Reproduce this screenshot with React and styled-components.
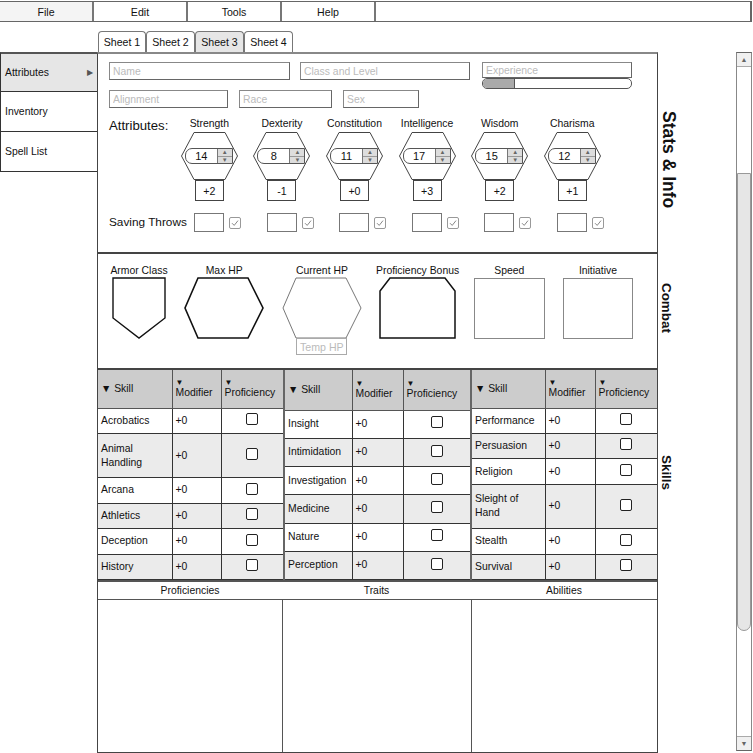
import React from 'react'
import styled, { createGlobalStyle } from 'styled-components'

const GlobalStyle = createGlobalStyle`
  html, body { margin: 0; padding: 0; background: #fff; }
  body { font-family: "Liberation Sans", Arial, sans-serif; color: #111; }
  * { box-sizing: border-box; }
`

const menus = [`File`, `Edit`, `Tools`, `Help`]
const sheets = [`Sheet 1`, `Sheet 2`, `Sheet 3`, `Sheet 4`]
const navItems = [`Attributes`, `Inventory`, `Spell List`]
const attributes = [
  { name: `Strength`, score: 14, mod: `+2` },
  { name: `Dexterity`, score: 8, mod: `-1` },
  { name: `Constitution`, score: 11, mod: `+0` },
  { name: `Intelligence`, score: 17, mod: `+3` },
  { name: `Wisdom`, score: 15, mod: `+2` },
  { name: `Charisma`, score: 12, mod: `+1` },
]
const skillTables = [
  { width: 185, cols: [74, 49, 62], head: 38, skills: [`Acrobatics`, `Animal Handling`, `Arcana`, `Athletics`, `Deception`, `History`] },
  { width: 187, cols: [67, 51, 67], head: 40, skills: [`Insight`, `Intimidation`, `Investigation`, `Medicine`, `Nature`, `Perception`] },
  { width: 187, cols: [73, 50, 62], head: 38, skills: [`Performance`, `Persuasion`, `Religion`, `Sleight of Hand`, `Stealth`, `Survival`] },
]
const notes = [
  { title: `Proficiencies`, width: 184 },
  { title: `Traits`, width: 189 },
  { title: `Abilities`, width: 186 },
]

const App = () => {
  return (
    <Page>
      <GlobalStyle />
      <MenuBar>
        {menus.map((m, i) => <MenuItem key={m} active={i === 0}>{m}</MenuItem>)}
        <MenuFill />
      </MenuBar>
      <TabRow>
        {sheets.map((s, i) => <Tab key={s} active={i === 2}>{s}</Tab>)}
      </TabRow>
      <Body>
        <Sidebar>
          {navItems.map((n, i) => (
            <NavItem key={n} active={i === 0}>
              {n}
              {i === 0 && <NavArrow>▶</NavArrow>}
            </NavItem>
          ))}
        </Sidebar>

        <Main>
          <StatsSection>
            <FieldRow>
              <Field width={181} placeholder="Name" />
              <Field width={170} placeholder="Class and Level" style={{ marginLeft: 10 }} />
              <ExpBlock>
                <Field width={150} height={16} placeholder="Experience" />
                <Progress><ProgressFill /></Progress>
              </ExpBlock>
            </FieldRow>
            <FieldRow gap={11} top={1}>
              <Field width={119} placeholder="Alignment" />
              <Field width={93} placeholder="Race" />
              <Field width={76} placeholder="Sex" />
            </FieldRow>

            <AttrRow>
              <AttrTitle>Attributes:</AttrTitle>
              <AttrGrid>
                {attributes.map(a => (
                  <AttrCol key={a.name}>
                    <AttrLabel>{a.name}</AttrLabel>
                    <HexBox>
                      <svg width="57" height="48" viewBox="0 0 57 48">
                        <polygon points="13,0.5 44,0.5 56.5,24 44,47.5 13,47.5 0.5,24" fill="#fff" stroke="#444" strokeWidth="1" />
                      </svg>
                      <Stepper>
                        <StepValue>{a.score}</StepValue>
                        <StepButtons>
                          <StepBtn>▲</StepBtn>
                          <StepBtn>▼</StepBtn>
                        </StepButtons>
                      </Stepper>
                    </HexBox>
                    <ModBox>{a.mod}</ModBox>
                  </AttrCol>
                ))}
              </AttrGrid>
            </AttrRow>

            <SaveRow>
              <SaveTitle>Saving Throws</SaveTitle>
              <AttrGrid>
                {attributes.map(a => (
                  <SaveCell key={a.name}>
                    <SaveBox />
                    <TinyCheck>
                      <svg width="10" height="10" viewBox="0 0 10 10">
                        <path d="M2 5.2 L4.2 7.4 L8 2.6" fill="none" stroke="#888" strokeWidth="1" />
                      </svg>
                    </TinyCheck>
                  </SaveCell>
                ))}
              </AttrGrid>
            </SaveRow>
          </StatsSection>

          <CombatSection>
            <CombatItem width={54}>
              <CombatLabel>Armor Class</CombatLabel>
              <svg width="54" height="62" viewBox="0 0 54 62">
                <polygon points="1,1 53,1 53,41 27,61 1,41" fill="#fff" stroke="#111" strokeWidth="1.4" />
              </svg>
            </CombatItem>
            <CombatItem width={80}>
              <CombatLabel>Max HP</CombatLabel>
              <svg width="80" height="62" viewBox="0 0 80 62">
                <polygon points="14,1 64,1 79,31 64,61 14,61 1,31" fill="#fff" stroke="#111" strokeWidth="1.6" />
              </svg>
            </CombatItem>
            <CombatItem width={79}>
              <CombatLabel>Current HP</CombatLabel>
              <svg width="80" height="62" viewBox="0 0 80 62">
                <polygon points="14,1 64,1 79,31 64,61 14,61 1,31" fill="#fff" stroke="#777" strokeWidth="1" />
              </svg>
              <TempHp>Temp HP</TempHp>
            </CombatItem>
            <CombatItem width={76}>
              <CombatLabel>Proficiency Bonus</CombatLabel>
              <svg width="77" height="62" viewBox="0 0 77 62">
                <polygon points="11,1 66,1 76,14 76,61 1,61 1,14" fill="#fff" stroke="#111" strokeWidth="1.5" />
              </svg>
            </CombatItem>
            <CombatItem width={71}>
              <CombatLabel>Speed</CombatLabel>
              <PlainBox />
            </CombatItem>
            <CombatItem width={70}>
              <CombatLabel>Initiative</CombatLabel>
              <PlainBox />
            </CombatItem>
          </CombatSection>

          <SkillsSection>
            {skillTables.map((t, ti) => (
              <TableWrap key={ti} width={t.width}>
                <SkillTable>
                  <colgroup>
                    {t.cols.map((c, ci) => <col key={ci} style={{ width: c }} />)}
                  </colgroup>
                  <thead>
                    <tr>
                      <HeadCell h={t.head}>▼ Skill</HeadCell>
                      <HeadCell h={t.head}><Caret>▼</Caret>Modifier</HeadCell>
                      <HeadCell h={t.head}><Caret>▼</Caret>Proficiency</HeadCell>
                    </tr>
                  </thead>
                  <tbody>
                    {t.skills.map((s, si) => (
                      <SkillRow key={s} shaded={si % 2 === 1}>
                        <Cell>{s}</Cell>
                        <Cell>+0</Cell>
                        <Cell center><Check /></Cell>
                      </SkillRow>
                    ))}
                  </tbody>
                </SkillTable>
              </TableWrap>
            ))}
          </SkillsSection>

          <NotesSection>
            <NotesHead>
              {notes.map(n => <NoteTitle key={n.title} width={n.width}>{n.title}</NoteTitle>)}
            </NotesHead>
            <NotesBody>
              {notes.map(n => <NoteBox key={n.title} width={n.width} />)}
            </NotesBody>
          </NotesSection>
        </Main>

        <SidePanel>
          <SideBlock height={200} top={6}><SideLabel big>Stats &amp; Info</SideLabel></SideBlock>
          <SideBlock height={116} top={-4}><SideLabel>Combat</SideLabel></SideBlock>
          <SideBlock height={212} top={-4}><SideLabel>Skills</SideLabel></SideBlock>
        </SidePanel>

        <Scrollbar>
          <ScrollBtn>▲</ScrollBtn>
          <ScrollTrack>
            <ScrollThumb />
          </ScrollTrack>
          <ScrollBtn>▼</ScrollBtn>
        </Scrollbar>
      </Body>
    </Page>
  )
}

export default App

const Page = styled.div`
  width: 753px;
  height: 753px;
  overflow: hidden;
  display: flex;
  flex-direction: column;
  font-size: 10.4px;
`
const MenuBar = styled.div`
  display: flex;
  width: 752px;
  height: 21px;
  margin-top: 1px;
  border: 1px solid #666;
  border-left: none;
`
const MenuItem = styled.div`
  width: 94px;
  display: flex;
  align-items: center;
  justify-content: center;
  border-right: 2px solid #777;
  background: ${p => (p.active ? `#f4f4f4` : `#fff`)};
  font-size: 10.6px;
`
const MenuFill = styled.div`
  flex: 1;
  border-right: 1px solid #666;
`
const TabRow = styled.div`
  display: flex;
  align-items: flex-end;
  height: 30px;
  padding-left: 98px;
`
const Tab = styled.div`
  width: 49px;
  height: 21px;
  display: flex;
  align-items: center;
  justify-content: center;
  border: 1px solid #777;
  border-bottom: none;
  border-radius: 4px 4px 0 0;
  background: ${p => (p.active ? `#e6e6e6` : `#fff`)};
  font-size: 10.6px;
  &:first-child { width: 48px; }
`
const Body = styled.div`
  display: flex;
  height: 701px;
`
const Sidebar = styled.div`
  width: 97px;
  display: flex;
  flex-direction: column;
`
const NavItem = styled.div`
  position: relative;
  height: 40px;
  display: flex;
  align-items: center;
  padding-left: 4px;
  border: 1px solid #333;
  border-top: ${p => (p.active ? `2px solid #555` : `none`)};
  border-right: none;
  background: ${p => (p.active ? `#e6e6e6` : `#fff`)};
`
const NavArrow = styled.span`
  position: absolute;
  right: 4px;
  font-size: 8px;
  color: #555;
`
const Main = styled.div`
  width: 561px;
  display: flex;
  flex-direction: column;
  border-left: 1px solid #444;
  border-right: 1px solid #444;
  border-top: 2px solid #888;
  border-bottom: 1px solid #444;
`
const StatsSection = styled.div`
  height: 200px;
  padding: 8px 0 0 11px;
  border-bottom: 2px solid #444;
`
const FieldRow = styled.div`
  display: flex;
  align-items: flex-start;
  gap: ${p => p.gap || 0}px;
  margin-top: ${p => p.top || 0}px;
`
const Field = styled.input`
  width: ${p => p.width}px;
  height: ${p => p.height || 18}px;
  border: 1px solid #888;
  border-right-color: #666;
  border-bottom-color: #666;
  padding: 0 3px;
  font: inherit;
  font-size: 10.4px;
  outline: none;
  &::placeholder { color: #bbb; }
`
const ExpBlock = styled.div`
  display: flex;
  flex-direction: column;
  margin-left: 12px;
`
const Progress = styled.div`
  width: 150px;
  height: 11px;
  border: 1px solid #555;
  border-radius: 5px;
  overflow: hidden;
`
const ProgressFill = styled.div`
  width: 32px;
  height: 100%;
  background: #aaa;
  border-right: 1px solid #555;
`
const AttrRow = styled.div`
  display: flex;
  margin-top: 9px;
`
const AttrTitle = styled.div`
  width: 64px;
  font-size: 13.2px;
  padding-top: 1px;
`
const AttrGrid = styled.div`
  display: grid;
  grid-template-columns: repeat(6, 72.6px);
`
const AttrCol = styled.div`
  display: flex;
  flex-direction: column;
  align-items: center;
`
const AttrLabel = styled.div`
  height: 15px;
  line-height: 13px;
  white-space: nowrap;
`
const HexBox = styled.div`
  position: relative;
  width: 57px;
  height: 48px;
  & > svg { display: block; }
`
const Stepper = styled.div`
  position: absolute;
  left: 4px;
  top: 16px;
  width: 48px;
  height: 16px;
  display: flex;
  border: 1px solid #555;
  border-radius: 7px 0 0 7px;
  background: #fff;
  overflow: hidden;
`
const StepValue = styled.div`
  flex: 1;
  display: flex;
  align-items: center;
  justify-content: center;
  font-size: 11px;
`
const StepButtons = styled.div`
  width: 15px;
  display: flex;
  flex-direction: column;
  border-left: 1px solid #777;
  background: #ddd;
`
const StepBtn = styled.div`
  flex: 1;
  display: flex;
  align-items: center;
  justify-content: center;
  font-size: 6px;
  line-height: 6px;
  color: #666;
  &:first-child { border-bottom: 1px solid #999; }
`
const ModBox = styled.div`
  width: 29px;
  height: 21px;
  display: flex;
  align-items: center;
  justify-content: center;
  border: 1px solid #444;
  font-size: 10.6px;
`
const SaveRow = styled.div`
  display: flex;
  align-items: center;
  margin-top: 12px;
`
const SaveTitle = styled.div`
  width: 64px;
  white-space: nowrap;
  font-size: 11.8px;
  margin-top: -2px;
`
const SaveCell = styled.div`
  display: flex;
  align-items: center;
  padding-left: 21px;
  gap: 5px;
`
const SaveBox = styled.div`
  width: 30px;
  height: 19px;
  border: 1px solid #777;
`
const TinyCheck = styled.div`
  width: 12px;
  height: 12px;
  border: 1px solid #999;
  border-radius: 2px;
  display: flex;
  align-items: center;
  justify-content: center;
`
const CombatSection = styled.div`
  height: 116px;
  display: flex;
  align-items: flex-start;
  gap: 18.2px;
  padding: 11px 0 0 14px;
  border-bottom: 2px solid #444;
`
const CombatItem = styled.div`
  width: ${p => p.width}px;
  display: flex;
  flex-direction: column;
  align-items: center;
  & > svg { display: block; flex: none; }
`
const CombatLabel = styled.div`
  height: 12px;
  line-height: 12px;
  white-space: nowrap;
`
const TempHp = styled.div`
  width: 51px;
  height: 17px;
  margin-top: -1px;
  display: flex;
  align-items: center;
  justify-content: center;
  border: 1px solid #aaa;
  background: #fff;
  color: #bbb;
  font-size: 10.6px;
`
const PlainBox = styled.div`
  width: 100%;
  height: 61px;
  margin-top: 1px;
  border: 1.5px solid #888;
`
const SkillsSection = styled.div`
  height: 212px;
  display: flex;
  border-bottom: 2px solid #555;
`
const TableWrap = styled.div`
  width: ${p => p.width}px;
  height: 100%;
  border-left: 2px solid #666;
  &:first-child { border-left: none; }
`
const SkillTable = styled.table`
  width: 100%;
  height: 100%;
  table-layout: fixed;
  border-collapse: collapse;
`
const HeadCell = styled.th`
  height: ${p => p.h}px;
  background: #ccc;
  border: 1px solid #555;
  border-top: none;
  padding: 2px 3px;
  text-align: left;
  font-weight: normal;
  vertical-align: middle;
  line-height: 12px;
  &:first-child { border-left: none; }
  &:last-child { border-right: none; }
`
const Caret = styled.span`
  display: block;
  font-size: 8px;
  line-height: 9px;
`
const SkillRow = styled.tr`
  background: ${p => (p.shaded ? `#ebebeb` : `#fff`)};
`
const Cell = styled.td`
  border: 1px solid #333;
  padding: 2px 3px;
  line-height: 14px;
  text-align: ${p => (p.center ? `center` : `left`)};
  vertical-align: middle;
  &:first-child { border-left: none; }
  &:last-child { border-right: none; }
`
const Check = styled.span`
  display: inline-block;
  width: 12px;
  height: 12px;
  border: 1.5px solid #222;
  border-radius: 2px;
  background: #fff;
  vertical-align: middle;
  margin-top: -4px;
`
const NotesSection = styled.div`
  flex: 1;
  display: flex;
  flex-direction: column;
`
const NotesHead = styled.div`
  display: flex;
  height: 17px;
`
const NoteTitle = styled.div`
  width: ${p => p.width}px;
  display: flex;
  align-items: center;
  justify-content: center;
`
const NotesBody = styled.div`
  flex: 1;
  display: flex;
  border-top: 1px solid #555;
`
const NoteBox = styled.div`
  width: ${p => p.width}px;
  border-left: 1px solid #555;
  &:first-child { border-left: none; }
`
const SidePanel = styled.div`
  width: 78px;
  display: flex;
  flex-direction: column;
  padding-top: 2px;
`
const SideBlock = styled.div`
  height: ${p => p.height}px;
  display: flex;
  align-items: center;
  position: relative;
  top: ${p => p.top || 0}px;
`
const SideLabel = styled.div`
  writing-mode: vertical-rl;
  font-weight: bold;
  font-size: ${p => (p.big ? `17.5px` : `13.4px`)};
  margin-left: ${p => (p.big ? 0 : 1)}px;
  white-space: nowrap;
`
const Scrollbar = styled.div`
  width: 16px;
  display: flex;
  flex-direction: column;
  border: 1px solid #888;
  border-top: 1px solid #666;
  border-bottom: 1px solid #666;
  margin-bottom: 2px;
`
const ScrollBtn = styled.div`
  height: 13px;
  display: flex;
  align-items: center;
  justify-content: center;
  font-size: 7px;
  color: #666;
  background: #f0f0f0;
`
const ScrollTrack = styled.div`
  flex: 1;
  padding-top: 106px;
  padding-bottom: 105px;
  display: flex;
  border-top: 1px solid #aaa;
  border-bottom: 1px solid #aaa;
`
const ScrollThumb = styled.div`
  flex: 1;
  background: #e6e6e6;
  border: 1px solid #999;
  border-radius: 0 0 7px 7px;
`
